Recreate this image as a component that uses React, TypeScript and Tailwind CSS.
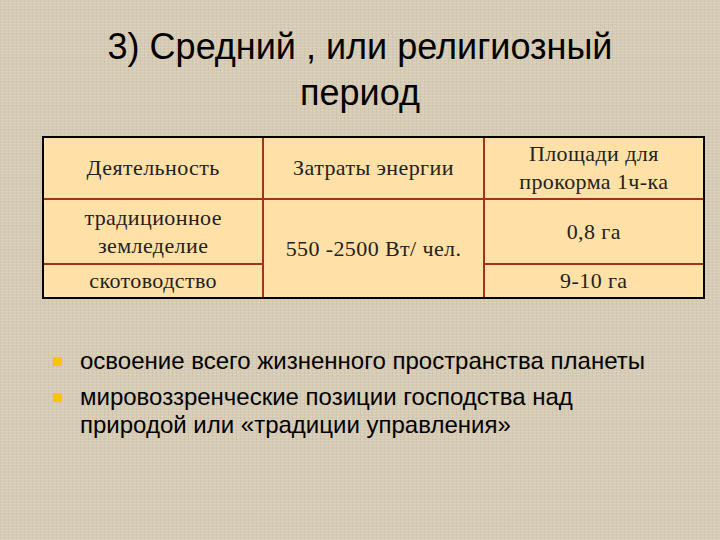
export default function App() {
  const serif = "font-['Liberation_Serif','DejaVu_Serif',serif]";
  const cell = `bg-[#ffe0a6] flex flex-col items-center justify-center text-center text-[22px] leading-[28px] tracking-[0.4px] text-[#222] ${serif}`;
  return (
    <div className="w-[720px] h-[540px] bg-[#d6cbb4] bg-[repeating-linear-gradient(0deg,rgba(255,255,255,0.12)_0px,rgba(255,255,255,0.12)_1px,transparent_1px,transparent_3px),repeating-linear-gradient(90deg,rgba(120,100,70,0.08)_0px,rgba(120,100,70,0.08)_1px,transparent_1px,transparent_4px)] overflow-hidden font-['Liberation_Sans',Arial,sans-serif]">
      <h1 className="pt-[24px] text-center text-[36px] leading-[46px] text-black font-normal">
        3) Средний , или религиозный
        <br />
        период
      </h1>

      <div className="mt-[20px] ml-[42px] w-[663px] border-2 border-black">
        <div className="grid grid-cols-3 grid-rows-[60px_63px_32px] gap-[2px] bg-[#a3311f]">
          <div className={cell}>Деятельность</div>
          <div className={cell}>Затраты энергии</div>
          <div className={cell}>
            <span>Площади для</span>
            <span>прокорма 1ч-ка</span>
          </div>
          <div className={cell}>
            <span>традиционное</span>
            <span>земледелие</span>
          </div>
          <div className={`${cell} row-span-2`}>550 -2500 Вт/ чел.</div>
          <div className={cell}>0,8 га</div>
          <div className={cell}>скотоводство</div>
          <div className={cell}>9-10 га</div>
        </div>
      </div>

      <ul className="mt-[48px] ml-[53px] flex flex-col gap-[8px] text-[24px] leading-[28px] text-black">
        <li className="flex items-start">
          <span className="mt-[10px] w-[9px] h-[9px] bg-[#f7c600] shrink-0" />
          <span className="ml-[18px]">освоение всего жизненного пространства планеты</span>
        </li>
        <li className="flex items-start">
          <span className="mt-[10px] w-[9px] h-[9px] bg-[#f7c600] shrink-0" />
          <span className="ml-[18px] w-[540px]">
            мировоззренческие позиции господства над природой или «традиции управления»
          </span>
        </li>
      </ul>
    </div>
  );
}
